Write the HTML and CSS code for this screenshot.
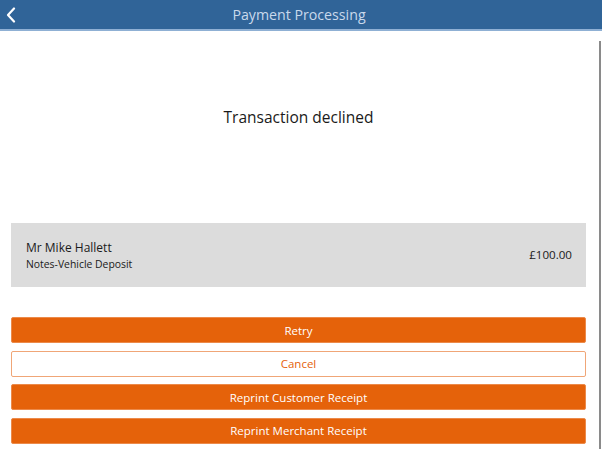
FILE: index.html
```html
<!DOCTYPE html>
<html lang="en">
<head>
    <meta charset="UTF-8">
    <meta name="viewport" content="width=device-width, initial-scale=1.0">
    <title>Payment Processing</title>
    <link rel="stylesheet" href="styles.css">
</head>
<body>

    <header class="topbar">
        <button class="back" aria-label="Back">
            <svg width="10" height="16" viewBox="0 0 10 16">
                <path d="M8 1.5 L2 8 L8 14.5" fill="none" stroke="#fff" stroke-width="2.2" stroke-linecap="round" stroke-linejoin="round"/>
            </svg>
        </button>
        <h1>Payment Processing</h1>
    </header>

    <div class="content">
        <div class="status">Transaction declined</div>

        <!-- Payment summary -->
        <section class="summary">
            <div class="who">
                <div class="name">Mr Mike Hallett</div>
                <div class="notes">Notes-Vehicle Deposit</div>
            </div>
            <div class="amount">£100.00</div>
        </section>

        <!-- Actions -->
        <div class="actions">
            <button class="btn">Retry</button>
            <button class="btn outline">Cancel</button>
            <button class="btn">Reprint Customer Receipt</button>
            <button class="btn">Reprint Merchant Receipt</button>
        </div>
    </div>

    <div class="scrollbar"></div>

</body>
</html>
```

FILE: styles.css
```css
body {
    font-family: 'Open Sans', 'Noto Sans', sans-serif;
    margin: 0;
    padding: 0;
    background-color: #fff;
    color: #1a1a1a;
    height: 449px;
    overflow: hidden;
}
.topbar {
    height: 29px;
    background-color: #306498;
    border-bottom: 2px solid #8fb0d4;
    display: flex;
    align-items: center;
    justify-content: center;
    position: relative;
}
.topbar h1 {
    margin: 0;
    font-size: 14.2px;
    font-weight: 400;
    color: #c9d9ec;
    padding-right: 4px;
}
.back {
    position: absolute;
    left: 4px;
    top: 6px;
    background: none;
    border: 0;
    padding: 0;
    width: 14px;
    height: 18px;
    display: flex;
    align-items: center;
    justify-content: center;
}
.content {
    padding: 0 16px 0 11px;
}
.status {
    height: 192px;
    display: flex;
    align-items: center;
    justify-content: center;
    font-size: 15.5px;
    box-sizing: border-box;
    padding-bottom: 21px;
}
.summary {
    background-color: #dcdcdc;
    height: 64px;
    display: flex;
    align-items: center;
    justify-content: space-between;
    padding: 0 14px 0 15px;
}
.name {
    font-size: 12px;
    line-height: 17px;
}
.notes {
    font-size: 10.4px;
    line-height: 16px;
}
.amount {
    font-size: 11.6px;
    padding-bottom: 2px;
}
.actions {
    margin-top: 30px;
    display: flex;
    flex-direction: column;
    gap: 7.5px;
}
.btn {
    height: 26px;
    background-color: #e5620a;
    color: #fff;
    border: 1px solid #ec8a4a;
    border-radius: 2px;
    font-family: inherit;
    font-size: 11.5px;
    padding: 0;
    cursor: pointer;
}
.btn.outline {
    background-color: #fff;
    color: #e5620a;
    border-color: #f0a677;
}
.scrollbar {
    position: absolute;
    left: 599px;
    top: 41px;
    width: 2px;
    height: 408px;
    background-color: #8a8a8a;
}
```
